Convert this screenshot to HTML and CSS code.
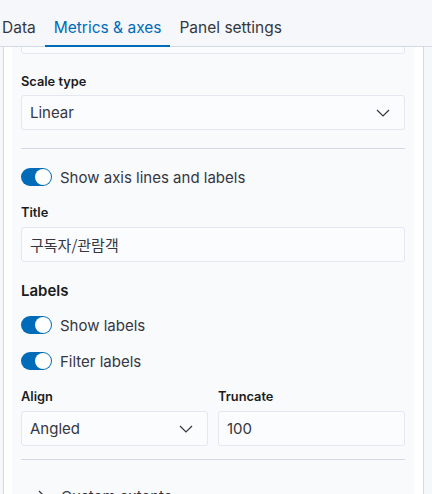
FILE: index.html
```html
<!DOCTYPE html>
<html>
<head>
<meta charset="utf-8">
<link rel="stylesheet" href="styles.css">
</head>
<body>
<div class="tabs">
  <div class="tab">Data</div>
  <div class="tab active">Metrics &amp; axes</div>
  <div class="tab">Panel settings</div>
</div>
<div class="scroll">
  <div class="panel">
    <div class="field ghost"></div>

    <div class="row">
      <div class="label">Scale type</div>
      <div class="field select">
        <span>Linear</span>
        <svg class="chev" width="14" height="8" viewBox="0 0 14 8"><path d="M1 1 L7 7 L13 1" fill="none" stroke="#343741" stroke-width="1.2"/></svg>
      </div>
    </div>

    <div class="divider"></div>

    <div class="switch-row first">
      <span class="switch"><span class="thumb"></span></span>
      <span class="switch-label">Show axis lines and labels</span>
    </div>

    <div class="row title-row">
      <div class="label">Title</div>
      <div class="field"><span class="ko">구독자/관람객</span></div>
    </div>

    <h3 class="heading">Labels</h3>

    <div class="switch-row">
      <span class="switch"><span class="thumb"></span></span>
      <span class="switch-label">Show labels</span>
    </div>
    <div class="switch-row second">
      <span class="switch"><span class="thumb"></span></span>
      <span class="switch-label">Filter labels</span>
    </div>

    <div class="grid">
      <div class="col">
        <div class="label">Align</div>
        <div class="field select">
          <span>Angled</span>
          <svg class="chev" width="14" height="8" viewBox="0 0 14 8"><path d="M1 1 L7 7 L13 1" fill="none" stroke="#343741" stroke-width="1.2"/></svg>
        </div>
      </div>
      <div class="col">
        <div class="label">Truncate</div>
        <div class="field"><span>100</span></div>
      </div>
    </div>

    <div class="divider bottom"></div>

    <div class="accordion">
      <svg width="10" height="14" viewBox="0 0 10 14"><path d="M2 1 L8 7 L2 13" fill="none" stroke="#343741" stroke-width="1.3"/></svg>
      <span>Custom extents</span>
    </div>
  </div>
</div>
</body>
</html>
```
FILE: styles.css
```css
* { box-sizing: border-box; }
html, body {
  margin: 0;
  padding: 0;
  height: 100%;
  overflow: hidden;
}
body {
  background: #f5f7fa;
  font-family: Inter, "Noto Sans", sans-serif;
  color: #343741;
}
.tabs {
  height: 47px;
  display: flex;
  align-items: flex-end;
  border-bottom: 1px solid #d3dae6;
  margin-left: -7px;
}
.tab {
  height: 40px;
  padding: 0 9px;
  display: flex;
  align-items: center;
  font-size: 15.5px;
  color: #343741;
  border-bottom: 2px solid transparent;
  margin-bottom: -1px;
  padding-top: 2px;
}
.tab.active {
  color: #006bb8;
  border-bottom-color: #006bb8;
}
.scroll {
  margin-left: 3px;
  width: 421px;
  height: 447px;
  border-left: 1px solid #d3dae6;
  border-right: 1px solid #d3dae6;
  background: #ffffff;
  padding: 0 9px 0 8px;
  overflow: hidden;
}
.panel {
  background: #f9fafc;
  padding: 0 9px 20px 9px;
  margin-top: -30px;
}
.field {
  height: 35px;
  background: #fbfcfd;
  border: 1px solid #e3e7ef;
  border-radius: 3px;
  display: flex;
  align-items: center;
  padding: 0 8px;
  font-size: 15px;
  color: #343741;
}
.field.ghost {
  height: 37px;
}
.select {
  justify-content: space-between;
}
.chev {
  margin-right: 6px;
}
.ko {
  font-family: "Noto Sans CJK KR", sans-serif;
  font-size: 15px;
}
.row {
  margin-top: 19px;
}
.label {
  font-size: 12.8px;
  line-height: 18px;
  font-weight: 600;
  color: #1a1c21;
  margin-bottom: 4px;
}
.title-row {
  margin-top: 18px;
}
.title-row .label {
  margin-bottom: 5px;
}
.divider {
  height: 1px;
  background: #d3dae6;
  margin-top: 18px;
}
.divider.bottom {
  margin-top: 13px;
}
.switch-row {
  display: flex;
  align-items: center;
  gap: 8px;
  height: 18px;
  margin-top: 13px;
}
.switch-row.first {
  margin-top: 19px;
}
.switch-row.second {
  margin-top: 18px;
}
.switch {
  width: 31px;
  height: 18px;
  border-radius: 9px;
  background: #006bb8;
  display: flex;
  align-items: center;
  justify-content: flex-end;
  padding-right: 1px;
}
.thumb {
  width: 16px;
  height: 16px;
  border-radius: 50%;
  background: #ffffff;
}
.switch-label {
  font-size: 15px;
  color: #343741;
}
.heading {
  margin: 17px 0 0 0;
  font-size: 15px;
  line-height: 24px;
  font-weight: 600;
  color: #1a1c21;
}
.grid {
  display: grid;
  grid-template-columns: 1fr 1fr;
  gap: 10px;
  margin-top: 18px;
}
.grid .label {
  margin-bottom: 5px;
}
.accordion {
  display: flex;
  align-items: center;
  gap: 14px;
  margin-top: 27px;
  padding-left: 16px;
  font-size: 15px;
  color: #343741;
}
```
